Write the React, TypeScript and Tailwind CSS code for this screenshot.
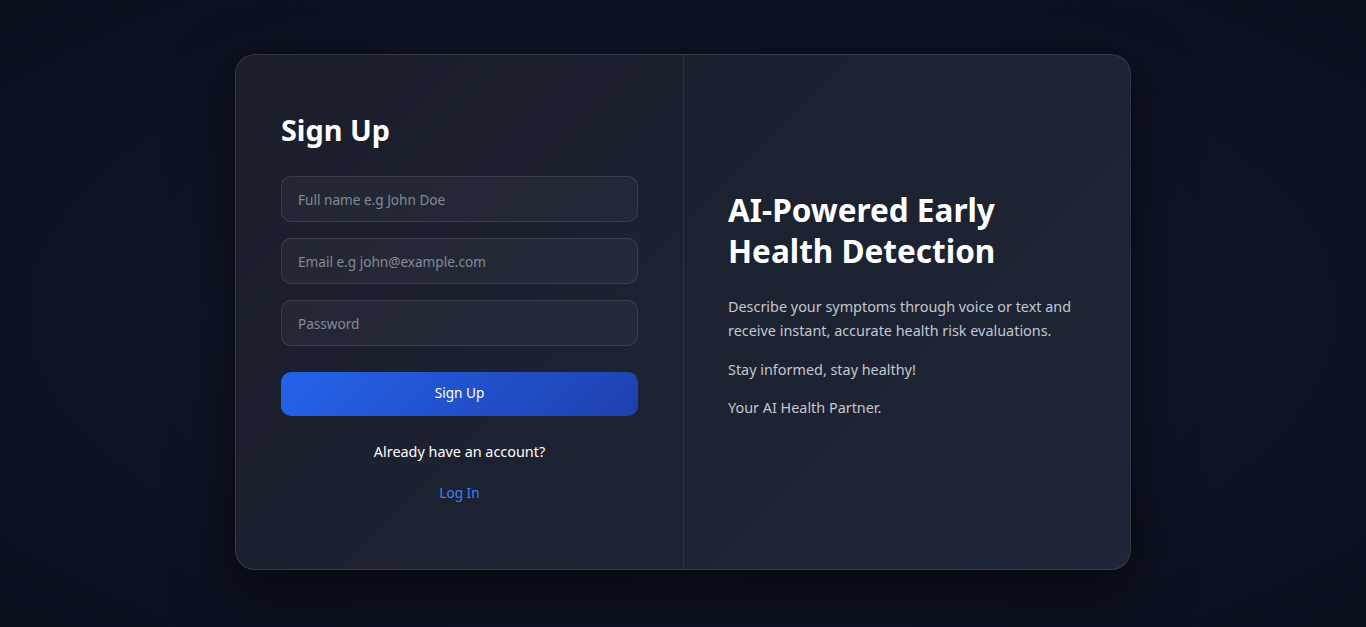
export default function App() {
  return (
    <div className="min-h-screen w-full flex items-center justify-center pb-1 bg-[radial-gradient(ellipse_at_center,#131a2b_0%,#0e1424_55%,#0a0f1c_100%)] font-['Noto_Sans',sans-serif]">
      <div className="w-[896px] h-[516px] flex rounded-[20px] border border-white/10 bg-[linear-gradient(135deg,#1b1e2b_0%,#1c2230_50%,#1e2637_100%)] shadow-[0_20px_60px_rgba(0,0,0,0.55)] overflow-hidden">
        {/* Form */}
        <div className="w-[448px] border-r border-white/[0.07] px-[45px] pt-[52px] flex flex-col">
          <h1 className="text-[28.8px] leading-[45px] font-bold text-white mb-[24px]">Sign Up</h1>
          <div className="flex flex-col gap-4">
            <input
              placeholder="Full name e.g John Doe"
              className="h-[46px] w-full rounded-[10px] border border-white/10 bg-white/[0.04] px-4 pt-[2px] text-[13.6px] text-white placeholder:text-[#858a97] outline-none"
            />
            <input
              placeholder="Email e.g john@example.com"
              className="h-[46px] w-full rounded-[10px] border border-white/10 bg-white/[0.04] px-4 pt-[2px] text-[13.6px] text-white placeholder:text-[#858a97] outline-none"
            />
            <input
              type="password"
              placeholder="Password"
              className="h-[46px] w-full rounded-[10px] border border-white/10 bg-white/[0.04] px-4 pt-[2px] text-[13.6px] text-white placeholder:text-[#858a97] outline-none"
            />
          </div>
          <button className="mt-[26px] h-[44px] w-full rounded-[10px] bg-[linear-gradient(135deg,#2563eb_0%,#1e40af_100%)] text-[13.6px] text-white">
            Sign Up
          </button>
          <p className="mt-[25px] text-center text-[14.4px] leading-[22px] text-white">Already have an account?</p>
          <a className="mt-[20px] text-center text-[13.6px] leading-[20px] text-[#3b82f6]">Log In</a>
        </div>

        {/* Info */}
        <div className="flex-1 px-[44px] flex flex-col justify-center pb-[14px]">
          <h2 className="text-[31.5px] leading-[41px] font-bold text-white mb-[24px]">
            AI-Powered Early
            <br />
            Health Detection
          </h2>
          <p className="text-[14.4px] leading-[24px] text-[#c4c8d0] mb-[15px]">
            Describe your symptoms through voice or text and receive instant, accurate health risk evaluations.
          </p>
          <p className="text-[14.4px] leading-[24px] text-[#c4c8d0] mb-[14px]">Stay informed, stay healthy!</p>
          <p className="text-[14.4px] leading-[24px] text-[#c4c8d0]">Your AI Health Partner.</p>
        </div>
      </div>
    </div>
  );
}
